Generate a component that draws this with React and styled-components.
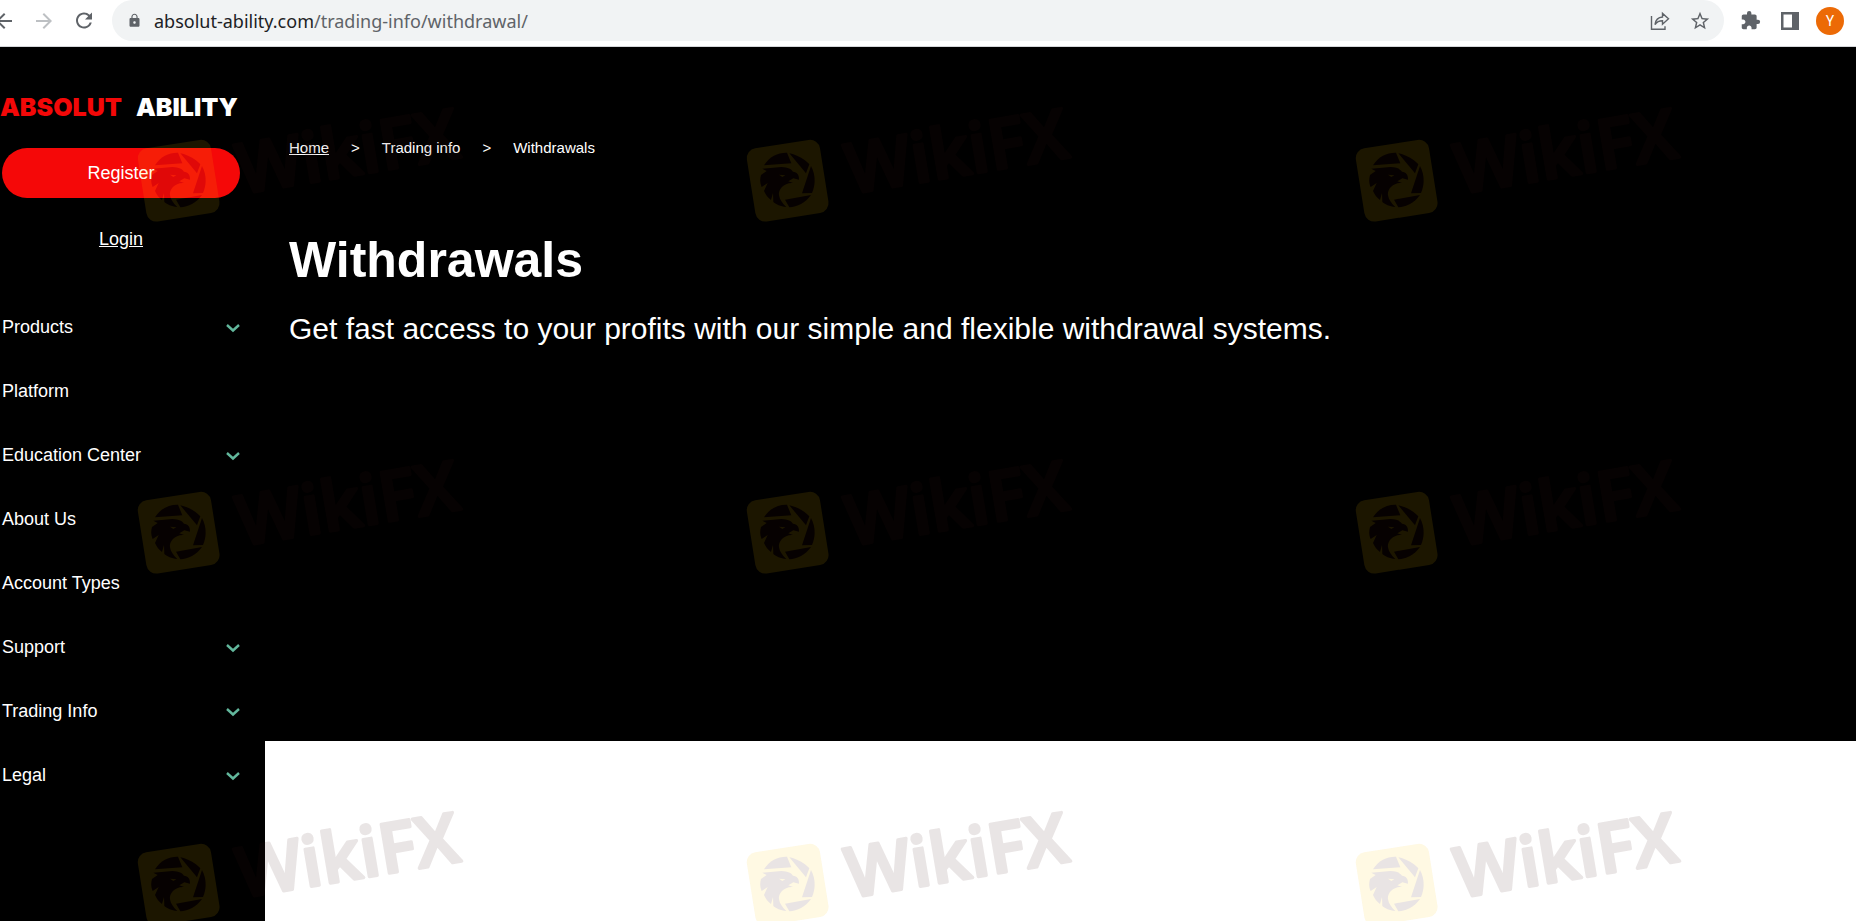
import React from 'react'
import styled, { createGlobalStyle } from 'styled-components'
import { MdArrowBack, MdArrowForward, MdExtension, MdLock, MdRefresh, MdStarBorder } from 'react-icons/md'

const GlobalStyle = createGlobalStyle`
* {
    box-sizing: border-box;
}
body {
    margin: 0;
    background-color: white;
    font-family: "Liberation Sans", Arial, sans-serif;
}
`
const Page = styled.div`
min-height: 100vh;
display: flex;
flex-direction: column;
`
const Toolbar = styled.header`
display: flex;
align-items: center;
gap: 12px;
padding: 0 12px 5px 0;
border-bottom: 1px solid #d5d7da;
background-color: white;
`
const History = styled.div`
display: flex;
gap: 16px;
margin: 0 4px 0 -8px;
`
const IconButton = styled.button`
width: ${props => props.$size}px;
height: ${props => props.$size}px;
display: flex;
align-items: center;
justify-content: center;
flex-shrink: 0;
padding: 0;
border: none;
border-radius: 50%;
background: ${props => props.$bg || 'none'};
color: ${props => props.$color || '#5f6368'};
font-family: Roboto, sans-serif;
font-size: 14px;
cursor: pointer;
`
const AddressBar = styled.div`
flex: 1;
height: 41px;
display: flex;
align-items: center;
gap: 12px;
padding: 0 10px 0 15px;
border-radius: 0 0 21px 21px / 0 0 21px 21px;
border-radius: 21px;
background-color: #f1f3f4;
color: #5f6368;
`
const Address = styled.div`
flex: 1;
font-family: "Noto Sans", "Open Sans", sans-serif;
font-size: 18px;
line-height: 24px;
white-space: nowrap;
outline: none;
`
const Domain = styled.span`
color: #202124;
`
const Body = styled.div`
flex: 1;
display: flex;
`
const Sidebar = styled.aside`
width: 265px;
flex-shrink: 0;
padding: 44px 25px 0 0;
background-color: black;
`
const Logo = styled.a`
display: flex;
gap: 14px;
font-family: Inter, sans-serif;
font-size: 25px;
font-weight: 900;
line-height: 32px;
color: white;
text-decoration: none;
`
const LogoAccent = styled.span`
color: #f30808;
`
const Account = styled.div`
display: flex;
flex-direction: column;
align-items: center;
gap: 29px;
padding: 25px 0 44px 2px;
`
const Register = styled.button`
width: 100%;
height: 50px;
border: none;
border-radius: 25px;
background-color: #f50808;
color: white;
font-family: inherit;
font-size: 18px;
cursor: pointer;
`
const Login = styled.a`
font-size: 18px;
line-height: 24px;
color: white;
`
const Menu = styled.nav`
display: flex;
flex-direction: column;
padding-left: 2px;
`
const MenuItem = styled.a`
display: flex;
align-items: center;
justify-content: space-between;
padding: 20px 0;
font-size: 18px;
line-height: 24px;
color: white;
text-decoration: none;
`
const Content = styled.main`
flex: 1;
background-color: white;
`
const Hero = styled.section`
min-height: 694px;
padding: 92px 24px 24px;
background-color: black;
color: white;
`
const Breadcrumbs = styled.nav`
display: flex;
gap: 22px;
font-size: 15px;
line-height: 18px;
`
const Crumb = styled.a`
color: white;
text-decoration: ${props => props.$underline ? 'underline' : 'none'};
`
const Title = styled.h1`
margin: 73px 0 0;
font-size: 50px;
line-height: 60px;
`
const Subtitle = styled.p`
margin: 21px 0 0;
font-size: 30px;
line-height: 36px;
`
const Watermarks = styled.div`
position: fixed;
inset: 0;
overflow: hidden;
display: grid;
grid-template-columns: repeat(3, 609px);
grid-auto-rows: 352px;
padding: 70px 0 0 111px;
pointer-events: none;
`

const items = [
    { label: 'Products', sub: true },
    { label: 'Platform' },
    { label: 'Education Center', sub: true },
    { label: 'About Us' },
    { label: 'Account Types' },
    { label: 'Support', sub: true },
    { label: 'Trading Info', sub: true },
    { label: 'Legal', sub: true },
]

function Chevron() {
    return (
        <svg width="14" height="12" viewBox="0 0 14 12" fill="none" stroke="#62b79c" strokeWidth="2.4">
            <path d="M1 4 L7 9.5 L13 4" />
        </svg>
    )
}

function ShareIcon() {
    return (
        <svg width="20" height="20" viewBox="0 0 20 20" fill="none" stroke="#5f6368" strokeWidth="1.4">
            <path d="M1.5 5v13.2h13.500v-3" />
            <path d="M5 13.500c.6-4.600 3-7.200 7.500-7.500v-3.600l6 5.400-6 5.400v-3.400c-3.300 0-5.600 1-7.500 3.700z" />
        </svg>
    )
}

function PanelIcon() {
    return (
        <svg width="18" height="18" viewBox="0 0 18 18">
            <path fill="#5f6368" fillRule="evenodd" d="M0 0h18v18H0zM2.500 2.500v13h8.500v-13z" />
        </svg>
    )
}

function Watermark() {
    return (
        <svg width="400" height="200" viewBox="0 -90 1200 600" opacity="0.11" aria-hidden="true">
            <rect x="92" y="131" width="222" height="222" rx="30" fill="#fac400" transform="rotate(-9 203 242)" />
            <g fill="#3c0a0a">
                <path d="M132 196 C148 169 176 157 201 158 L214 190 Z" />
                <path d="M208 160 C236 166 254 179 268 193 L258 220 Z" />
                <path d="M273 198 C289 228 285 258 276 279 L246 280 Z" />
                <path d="M273 285 C256 309 232 320 208 322 L195 299 Z" />
                <path d="M127 206 L184 201 C205 202 213 207 219 215 C231 217 237 222 237 239 L220 235 L205 244 L219 249 C192 247 174 268 177 286 C179 299 187 310 199 321 C180 319 170 314 160 306 L159 279 L153 300 C143 293 137 284 132 273 L143 249 L125 261 C119 248 120 236 123 225 L140 213 Z" />
            </g>
            <path d="M177 224 L196 226 L187 231 Z" fill="#fac400" />
            <text
                x="390"
                y="282"
                transform="rotate(-9.500 390 282)"
                fontFamily="Open Sans, sans-serif"
                fontSize="208"
                fontWeight="600"
                fill="#3c1414"
                stroke="#3c1414"
                strokeWidth="10"
                strokeLinejoin="round"
            >
                WikiFX
            </text>
        </svg>
    )
}

export default function App() {
    return (
        <Page>
            <GlobalStyle />
            <Toolbar>
                <History>
                    <IconButton $size={24} aria-label="Back"><MdArrowBack size={24} /></IconButton>
                    <IconButton $size={24} $color="#bdc0c3" aria-label="Forward"><MdArrowForward size={24} /></IconButton>
                    <IconButton $size={24} aria-label="Reload"><MdRefresh size={25} /></IconButton>
                </History>
                <AddressBar>
                    <MdLock size={15} />
                    <Address role="textbox" aria-label="Address" contentEditable suppressContentEditableWarning>
                        <Domain>absolut-ability.com</Domain>/trading-info/withdrawal/
                    </Address>
                    <IconButton $size={28} aria-label="Share"><ShareIcon /></IconButton>
                    <IconButton $size={28} aria-label="Bookmark"><MdStarBorder size={22} /></IconButton>
                </AddressBar>
                <IconButton $size={28} aria-label="Extensions"><MdExtension size={21} /></IconButton>
                <IconButton $size={28} aria-label="Side panel"><PanelIcon /></IconButton>
                <IconButton $size={28} $bg="#ec6a06" $color="white" aria-label="Profile">Y</IconButton>
            </Toolbar>
            <Body>
                <Sidebar>
                    <Logo href="#">
                        <LogoAccent>ABSOLUT</LogoAccent>
                        <span>ABILITY</span>
                    </Logo>
                    <Account>
                        <Register>Register</Register>
                        <Login href="#">Login</Login>
                    </Account>
                    <Menu>
                        {items.map(item => (
                            <MenuItem href="#" key={item.label}>
                                {item.label}
                                {item.sub && <Chevron />}
                            </MenuItem>
                        ))}
                    </Menu>
                </Sidebar>
                <Content>
                    <Hero>
                        <Breadcrumbs>
                            <Crumb href="#" $underline>Home</Crumb>
                            <span>&gt;</span>
                            <Crumb href="#">Trading info</Crumb>
                            <span>&gt;</span>
                            <span>Withdrawals</span>
                        </Breadcrumbs>
                        <Title>Withdrawals</Title>
                        <Subtitle>Get fast access to your profits with our simple and flexible withdrawal systems.</Subtitle>
                    </Hero>
                </Content>
            </Body>
            <Watermarks>
                {Array.from({ length: 9 }, (_, i) => <Watermark key={i} />)}
            </Watermarks>
        </Page>
    )
}
